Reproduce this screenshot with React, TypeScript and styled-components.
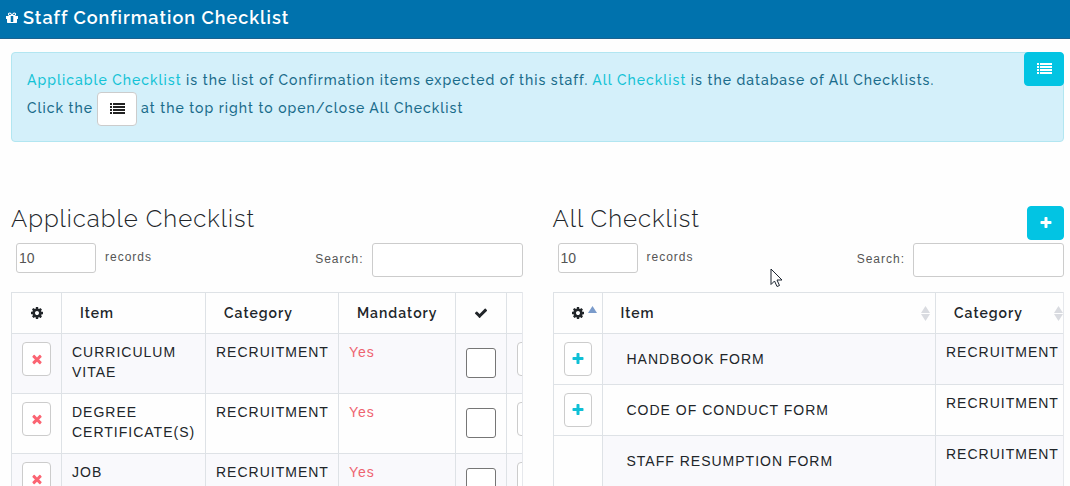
import React from "react";
import styled, { createGlobalStyle } from "styled-components";

const GlobalStyle = createGlobalStyle`
  * { box-sizing: border-box; }
  body {
    margin: 0;
    overflow: hidden;
    background: #fefefe;
    color: #212529;
    font-family: "Liberation Sans", Arial, sans-serif;
    font-size: 14px;
    line-height: 20px;
    letter-spacing: 1px;
  }
  button, input, select { font: inherit; }
`;

const display = `"Raleway", "Lato", sans-serif`;
const line = "#dee2e6";

const Page = styled.div`
  height: 100vh;
  overflow: hidden;
`;

const Header = styled.header`
  display: flex;
  align-items: center;
  gap: 4px;
  height: 39px;
  padding: 0 5px 3px;
  background: #0072ad;
  border-bottom: 1px solid #1b628f;
  color: #fff;
`;

const Title = styled.h1`
  margin: 0;
  font-family: ${display};
  font-size: 18px;
  font-weight: 600;
  line-height: 24px;
`;

const Main = styled.main`
  padding: 13px 6px 0 11px;
`;

const Alert = styled.section`
  position: relative;
  padding: 15px;
  border: 1px solid #b2e6f1;
  border-radius: 4px;
  background: #d4f0fa;
  color: #1a6c8b;
  font-family: ${display};
  font-weight: 500;
`;

const AlertLine = styled.p`
  margin: 0;
  line-height: 24px;
`;

const AlertRow = styled(AlertLine)`
  display: flex;
  align-items: flex-start;
  gap: 4px;
  line-height: 32px;
`;

const Term = styled.span`
  color: #14c3d6;
`;

const Button = styled.button<{ $tone?: "solid" | "add" | "remove"; $width: number }>`
  display: inline-flex;
  align-items: center;
  justify-content: center;
  width: ${(p) => p.$width}px;
  height: 34px;
  padding: 0;
  border: 1px solid ${(p) => (p.$tone === "solid" ? "#02c4e3" : "#ccc")};
  border-radius: 4px;
  background: ${(p) => (p.$tone === "solid" ? "#02c4e3" : "#fff")};
  color: ${(p) =>
    p.$tone === "solid" ? "#fff" : p.$tone === "add" ? "#0fc0d6" : p.$tone === "remove" ? "#fb6472" : "#222"};
  vertical-align: top;
  cursor: pointer;
`;

const Corner = styled.div`
  position: absolute;
  top: -1px;
  right: -1px;
  display: flex;
`;

const Columns = styled.div`
  display: grid;
  grid-template-columns: minmax(0, 1fr) minmax(0, 1fr);
  gap: 30px;
  margin-top: 64px;
`;

const PanelHead = styled.div`
  display: flex;
  align-items: flex-start;
  justify-content: space-between;
  height: 37px;
`;

const Heading = styled.h2`
  margin: 0;
  font-family: ${display};
  font-size: 24px;
  font-weight: 300;
  line-height: 26px;
`;

const Controls = styled.div`
  display: flex;
  align-items: flex-start;
  justify-content: space-between;
  padding-left: 5px;
  margin-bottom: 15px;
  color: #555;
  font-size: 12px;
`;

const Length = styled.label`
  display: flex;
  align-items: flex-start;
  gap: 9px;
  line-height: 28px;
`;

const LengthSelect = styled.select`
  appearance: none;
  width: 80px;
  height: 30px;
  padding: 0 2px;
  border: 1px solid #ccc;
  border-radius: 3px;
  background: #fff;
  color: #555;
  font-size: 14px;
  letter-spacing: normal;
`;

const Search = styled.label`
  display: flex;
  align-items: flex-start;
  gap: 8px;
  line-height: 32px;
`;

const SearchInput = styled.input`
  width: 151px;
  height: 34px;
  padding: 4px 8px;
  border: 1px solid #ccc;
  border-radius: 3px;
  background: #fff;
`;

const Scroller = styled.div`
  overflow: hidden;
  border-right: 1px solid #e6e8ec;
`;

const Table = styled.table<{ $min: number }>`
  width: 100%;
  min-width: ${(p) => p.$min}px;
  table-layout: fixed;
  border-collapse: separate;
  border-spacing: 0;
  border-top: 1px solid ${line};

  tbody tr:nth-child(odd) { background: #f9f9fc; }
`;

const Col = styled.col<{ $width?: number }>`
  width: ${(p) => (p.$width ? `${p.$width}px` : "auto")};
`;

const Th = styled.th<{ $icon?: boolean }>`
  height: 41px;
  padding: ${(p) => (p.$icon ? "0" : "0 0 0 18px")};
  border-left: 1px solid ${line};
  border-bottom: 1px solid ${line};
  font-family: ${display};
  font-weight: 600;
  text-align: ${(p) => (p.$icon ? "center" : "left")};
`;

const HeadCell = styled.div<{ $kind?: "icon" | "last" }>`
  display: flex;
  align-items: center;
  justify-content: space-between;
  padding: ${(p) => (p.$kind === "icon" ? "0 5px 0 17px" : p.$kind === "last" ? "0" : "0 5px 0 0")};
`;

const IconCell = styled.div`
  display: flex;
  justify-content: center;
`;

const Td = styled.td<{ $tall?: boolean; $indent?: boolean; $sorted?: boolean }>`
  height: ${(p) => (p.$tall ? 60 : 51)}px;
  padding: 8px 0 8px ${(p) => (p.$indent ? 24 : 10)}px;
  border-left: 1px solid ${line};
  border-bottom: 1px solid ${line};
  background: ${(p) => (p.$sorted ? "#fefefe" : "transparent")};
  vertical-align: ${(p) => (p.$indent ? "middle" : "top")};
`;

const Yes = styled.span`
  color: #ee6470;
`;

const Check = styled.input`
  appearance: none;
  display: block;
  width: 30px;
  height: 30px;
  margin: 6px 0 0;
  border: 1px solid #767676;
  border-radius: 3px;
  background: #fff;
`;

const Svg = styled.svg`
  display: inline-block;
  flex: none;
  vertical-align: middle;
  fill: currentColor;
`;

const Pointer = styled.svg`
  position: fixed;
  left: 72%;
  top: 268px;
  pointer-events: none;
`;

const shapes = {
  gift: "M1056 1356v-716h-320v716q0 25 18 38.5t46 13.5h192q28 0 46-13.5t18-38.5zm-456-844h195l-126-161q-26-31-69-31-40 0-68 28t-28 68 28 68 68 28zm688-96q0-40-28-68t-68-28q-43 0-69 31l-125 161h194q40 0 68-28t28-68zm376 256v320q0 14-9 23t-23 9h-96v416q0 40-28 68t-68 28h-1088q-40 0-68-28t-28-68v-416h-96q-14 0-23-9t-9-23v-320q0-14 9-23t23-9h440q-93 0-158.5-65.5t-65.5-158.5 65.5-158.5 158.5-65.5q107 0 168 77l128 165 128-165q61-77 168-77 93 0 158.5 65.5t65.5 158.5-65.5 158.5-158.5 65.5h440q14 0 23 9t9 23z",
  cog: "M1152 896q0-106-75-181t-181-75-181 75-75 181 75 181 181 75 181-75 75-181zm512-109v222q0 12-8 23t-20 13l-185 28q-19 54-39 91 35 50 107 138 10 12 10 25t-9 23q-27 37-99 108t-94 71q-12 0-26-9l-138-108q-44 23-91 38-16 136-29 186-7 28-36 28h-222q-14 0-24.5-8.5t-11.5-21.5l-28-184q-49-16-90-37l-141 107q-10 9-25 9-14 0-25-11-126-114-165-168-7-10-7-23 0-12 8-23 15-21 51-66.5t54-70.5q-27-50-41-99l-183-27q-13-2-21-12.5t-8-23.5v-222q0-12 8-23t19-13l186-28q14-46 39-92-40-57-107-138-10-12-10-24 0-10 9-23 26-36 98.5-107.5t94.5-71.5q13 0 26 10l138 107q44-23 91-38 16-136 29-186 7-28 36-28h222q14 0 24.5 8.5t11.5 21.5l28 184q49 16 90 37l142-107q9-9 24-9 13 0 25 10 129 119 165 170 7 8 7 22 0 12-8 23-15 21-51 66.5t-54 70.5q26 50 41 98l183 28q13 2 21 12.5t8 23.5z",
  close: "M1490 1322q0 40-28 68l-136 136q-28 28-68 28t-68-28l-294-294-294 294q-28 28-68 28t-68-28l-136-136q-28-28-28-68t28-68l294-294-294-294q-28-28-28-68t28-68l136-136q28-28 68-28t68 28l294 294 294-294q28-28 68-28t68 28l136 136q28 28 28 68t-28 68l-294 294 294 294q28 28 28 68z",
  plus: "M1600 736v192q0 40-28 68t-68 28h-416v416q0 40-28 68t-68 28h-192q-40 0-68-28t-28-68v-416h-416q-40 0-68-28t-28-68v-192q0-40 28-68t68-28h416v-416q0-40 28-68t68-28h192q40 0 68 28t28 68v416h416q40 0 68 28t28 68z",
  check: "M1671 566q0 40-28 68l-724 724-136 136q-28 28-68 28t-68-28l-136-136-362-362q-28-28-28-68t28-68l136-136q28-28 68-28t68 28l294 295 656-657q28-28 68-28t68 28l136 136q28 28 28 68z",
};

function Icon({ name, size = 14 }: { name: keyof typeof shapes; size?: number }) {
  return (
    <Svg width={size} height={size} viewBox="0 0 1792 1792" aria-hidden="true">
      <path d={shapes[name]} />
    </Svg>
  );
}

function ListIcon() {
  return (
    <Svg width="15" height="12" viewBox="0 0 15 12" aria-hidden="true">
      {[0, 3, 6, 9].map((y) => (
        <g key={y}>
          <rect x="0" y={y} width="2" height="2" />
          <rect x="3" y={y} width="12" height="2" />
        </g>
      ))}
    </Svg>
  );
}

function SortIcon({ asc }: { asc?: boolean }) {
  return (
    <Svg width="9" height="15" viewBox="0 0 9 15" aria-hidden="true">
      <path d="M4.5 0L9 7H0z" fill={asc ? "#7a9bcb" : "#d9dbe0"} />
      {!asc && <path d="M0 8h9l-4.5 7z" fill="#d9dbe0" />}
    </Svg>
  );
}

function TableControls() {
  return (
    <Controls>
      <Length>
        <LengthSelect defaultValue="10">
          <option>10</option>
          <option>25</option>
          <option>50</option>
        </LengthSelect>
        records
      </Length>
      <Search>
        Search:
        <SearchInput type="text" />
      </Search>
    </Controls>
  );
}

const applicable = ["CURRICULUM VITAE", "DEGREE CERTIFICATE(S)", "JOB"];
const all = [
  { name: "HANDBOOK FORM", open: true },
  { name: "CODE OF CONDUCT FORM", open: true },
  { name: "STAFF RESUMPTION FORM", open: false },
];

export default function App() {
  return (
    <Page>
      <GlobalStyle />
      <Header>
        <Icon name="gift" />
        <Title>Staff Confirmation Checklist</Title>
      </Header>
      <Main>
        <Alert>
          <AlertLine>
            <Term>Applicable Checklist</Term> is the list of Confirmation items expected of this staff.{" "}
            <Term>All Checklist</Term> is the database of All Checklists.
          </AlertLine>
          <AlertRow as="div">
            <span>Click the</span>
            <Button $width={40} aria-label="Toggle list"><ListIcon /></Button>
            <span>at the top right to open/close All Checklist</span>
          </AlertRow>
          <Corner>
            <Button $width={40} $tone="solid" aria-label="Toggle All Checklist"><ListIcon /></Button>
          </Corner>
        </Alert>
        <Columns>
          <section>
            <PanelHead><Heading>Applicable Checklist</Heading></PanelHead>
            <TableControls />
            <Scroller>
              <Table $min={562}>
                <colgroup>
                  <Col $width={50} /><Col /><Col $width={133} /><Col $width={117} /><Col $width={51} /><Col $width={67} />
                </colgroup>
                <thead>
                  <tr>
                    <Th $icon><IconCell><Icon name="cog" /></IconCell></Th>
                    <Th>Item</Th>
                    <Th>Category</Th>
                    <Th>Mandatory</Th>
                    <Th $icon><IconCell><Icon name="check" /></IconCell></Th>
                    <Th />
                  </tr>
                </thead>
                <tbody>
                  {applicable.map((item) => (
                    <tr key={item}>
                      <Td $tall><Button $width={29} $tone="remove" aria-label={`Remove ${item}`}><Icon name="close" /></Button></Td>
                      <Td $tall>{item}</Td>
                      <Td $tall>RECRUITMENT</Td>
                      <Td $tall><Yes>Yes</Yes></Td>
                      <Td $tall><Check type="checkbox" aria-label={`Confirm ${item}`} /></Td>
                      <Td $tall><Button $width={40} aria-label={`Options for ${item}`} /></Td>
                    </tr>
                  ))}
                </tbody>
              </Table>
            </Scroller>
          </section>
          <section>
            <PanelHead>
              <Heading>All Checklist</Heading>
              <Button $width={37} $tone="solid" aria-label="Add checklist"><Icon name="plus" /></Button>
            </PanelHead>
            <TableControls />
            <Scroller>
              <Table $min={400}>
                <colgroup>
                  <Col $width={49} /><Col /><Col $width={128} />
                </colgroup>
                <thead>
                  <tr>
                    <Th $icon><HeadCell $kind="icon"><Icon name="cog" /><SortIcon asc /></HeadCell></Th>
                    <Th><HeadCell>Item<SortIcon /></HeadCell></Th>
                    <Th><HeadCell $kind="last">Category<SortIcon /></HeadCell></Th>
                  </tr>
                </thead>
                <tbody>
                  {all.map(({ name, open }) => (
                    <tr key={name}>
                      <Td $sorted>{open && <Button $width={28} $tone="add" aria-label={`Add ${name}`}><Icon name="plus" /></Button>}</Td>
                      <Td $indent>{name}</Td>
                      <Td>RECRUITMENT</Td>
                    </tr>
                  ))}
                </tbody>
              </Table>
            </Scroller>
          </section>
        </Columns>
      </Main>
      <Pointer width="13" height="20" viewBox="0 0 13 20" aria-hidden="true">
        <path d="M1 1v15.500l3.500-3.500 2.500 5.500 2.500-1-2.500-5.500h5z" fill="#fff" stroke="#1c2430" />
      </Pointer>
    </Page>
  );
}
